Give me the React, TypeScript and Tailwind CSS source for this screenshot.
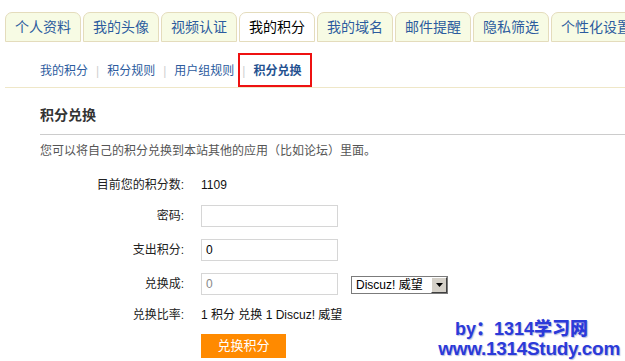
const tabs = ["个人资料", "我的头像", "视频认证", "我的积分", "我的域名", "邮件提醒", "隐私筛选", "个性化设置"];

const subLinks = ["我的积分", "积分规则", "用户组规则", "积分兑换"];

const font = { fontFamily: '"Liberation Sans", "Noto Sans CJK SC", sans-serif' };

function Row({ label, children, className }: { label: string; children: React.ReactNode; className?: string }) {
    return (
        <div className={"flex items-center h-[22px] " + (className ?? "")}>
            <div className="w-[184px] text-right text-[12px] text-[#222]">{label}:</div>
            <div className="ml-[17px] flex items-center text-[12px] text-[#111]">{children}</div>
        </div>
    );
}

export default function App() {
    return (
        <div className="relative w-[625px] h-[361px] bg-white overflow-hidden" style={font}>
            {/* tabs */}
            <div className="flex gap-[2px] pl-[5px] pt-[12px] w-[700px]">
                {tabs.map((t, i) => {
                    const active = i === 3;
                    return (
                        <div
                            key={t}
                            className={
                                "h-[30px] shrink-0 border border-[#e4dcbc] rounded-t-[7px] flex items-center justify-center text-[14px] " +
                                (active ? "w-[76px] bg-white text-black" : i === 7 ? "w-[90px] bg-[#f7fbe4] text-[#2c5b9e]" : "w-[76px] bg-[#f7fbe4] text-[#2c5b9e]")
                            }
                        >
                            {t}
                        </div>
                    );
                })}
            </div>

            {/* sub navigation */}
            <div className="relative ml-[5px] h-[46px] border-b border-[#efe7c8] pl-[35px] pt-[22px]">
                <div className="flex items-center h-[14px] text-[12px] leading-[14px]">
                    {subLinks.map((s, i) => (
                        <div key={s} className="flex items-center">
                            {i > 0 && <span className="mx-[8px] text-[#d0d0d0]">|</span>}
                            <span className={i === 3 ? "font-bold text-[#245190]" : "text-[#2c5b9e]"}>{s}</span>
                        </div>
                    ))}
                </div>
                <div className="absolute left-[233px] top-[11px] w-[74px] h-[34px] border-2 border-[#ee1111]" />
            </div>

            {/* content */}
            <div className="pl-[40px]">
                <div className="mt-[17px] h-[20px] leading-[20px] text-[14px] font-bold text-[#333]">积分兑换</div>
                <div className="mt-[9px] h-px bg-[#cccccc]" />
                <div className="mt-[8px] h-[16px] leading-[16px] text-[12px] text-[#555]">
                    您可以将自己的积分兑换到本站其他的应用（比如论坛）里面。
                </div>
            </div>

            <div className="mt-[15px]">
                <Row label="目前您的积分数">1109</Row>
                <Row label="密码" className="mt-[9px]">
                    <div className="w-[137px] h-[22px] border border-[#d6d6d6] bg-white" />
                </Row>
                <Row label="支出积分" className="mt-[12px]">
                    <div className="w-[137px] h-[22px] border border-[#d6d6d6] bg-white flex items-center pl-[4px] text-[12px] text-black">0</div>
                </Row>
                <Row label="兑换成" className="mt-[12px]">
                    <div className="w-[137px] h-[22px] border border-[#d6d6d6] bg-white flex items-center pl-[4px] text-[12px] text-[#888]">0</div>
                    <div className="ml-[13px] mt-[2px] w-[97px] h-[18px] border border-[#7b7b7b] bg-white flex items-center">
                        <span className="flex-1 pl-[4px] text-[12px] leading-[14px] text-black whitespace-nowrap">Discuz! 威望</span>
                        <div className="w-[16px] h-[16px] bg-[#d4d0c8] border border-t-white border-l-white border-b-[#404040] border-r-[#404040] flex items-center justify-center">
                            <svg width="7" height="4" viewBox="0 0 7 4">
                                <path d="M0 0h7L3.5 4z" fill="#000" />
                            </svg>
                        </div>
                    </div>
                </Row>
                <Row label="兑换比率" className="mt-[9px]">1 积分 兑换 1 Discuz! 威望</Row>
                <div className="mt-[8px] ml-[201px] w-[85px] h-[24px] bg-[#ff8a00] flex items-center justify-center text-[13px] text-white">
                    兑换积分
                </div>
            </div>

            {/* watermark */}
            <div
                className="absolute right-[5px] bottom-[2px] flex flex-col items-end font-black text-[#2b3ad9] leading-[20px]"
                style={{ textShadow: "1px 1px 1px #b8bde0" }}
            >
                <div className="mr-[32px] text-[18px]">by：1314学习网</div>
                <div className="text-[19px] tracking-[-0.3px]">www.1314Study.com</div>
            </div>
        </div>
    );
}
